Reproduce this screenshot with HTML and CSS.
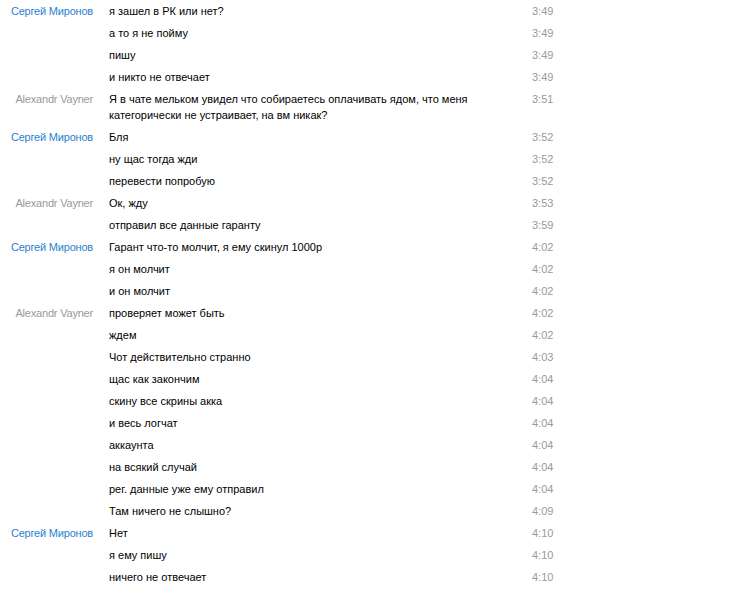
FILE: index.html
```html
<!DOCTYPE html>
<html>
<head>
<meta charset="utf-8">
<link rel="stylesheet" href="styles.css">
</head>
<body>
<div class="log">
  <div class="row"><div class="name me">Сергей Миронов</div><div class="msg">я зашел в РК или нет?</div><div class="time">3:49</div></div>
  <div class="row"><div class="name"></div><div class="msg">а то я не пойму</div><div class="time">3:49</div></div>
  <div class="row"><div class="name"></div><div class="msg">пишу</div><div class="time">3:49</div></div>
  <div class="row"><div class="name"></div><div class="msg">и никто не отвечает</div><div class="time">3:49</div></div>
  <div class="row"><div class="name other">Alexandr Vayner</div><div class="msg">Я в чате мельком увидел что собираетесь оплачивать ядом, что меня категорически не устраивает, на вм никак?</div><div class="time">3:51</div></div>
  <div class="row"><div class="name me">Сергей Миронов</div><div class="msg">Бля</div><div class="time">3:52</div></div>
  <div class="row"><div class="name"></div><div class="msg">ну щас тогда жди</div><div class="time">3:52</div></div>
  <div class="row"><div class="name"></div><div class="msg">перевести попробую</div><div class="time">3:52</div></div>
  <div class="row"><div class="name other">Alexandr Vayner</div><div class="msg">Ок, жду</div><div class="time">3:53</div></div>
  <div class="row"><div class="name"></div><div class="msg">отправил все данные гаранту</div><div class="time">3:59</div></div>
  <div class="row"><div class="name me">Сергей Миронов</div><div class="msg">Гарант что-то молчит, я ему скинул 1000р</div><div class="time">4:02</div></div>
  <div class="row"><div class="name"></div><div class="msg">я он молчит</div><div class="time">4:02</div></div>
  <div class="row"><div class="name"></div><div class="msg">и он молчит</div><div class="time">4:02</div></div>
  <div class="row"><div class="name other">Alexandr Vayner</div><div class="msg">проверяет может быть</div><div class="time">4:02</div></div>
  <div class="row"><div class="name"></div><div class="msg">ждем</div><div class="time">4:02</div></div>
  <div class="row"><div class="name"></div><div class="msg">Чот действительно странно</div><div class="time">4:03</div></div>
  <div class="row"><div class="name"></div><div class="msg">щас как закончим</div><div class="time">4:04</div></div>
  <div class="row"><div class="name"></div><div class="msg">скину все скрины акка</div><div class="time">4:04</div></div>
  <div class="row"><div class="name"></div><div class="msg">и весь логчат</div><div class="time">4:04</div></div>
  <div class="row"><div class="name"></div><div class="msg">аккаунта</div><div class="time">4:04</div></div>
  <div class="row"><div class="name"></div><div class="msg">на всякий случай</div><div class="time">4:04</div></div>
  <div class="row"><div class="name"></div><div class="msg">рег. данные уже ему отправил</div><div class="time">4:04</div></div>
  <div class="row"><div class="name"></div><div class="msg">Там ничего не слышно?</div><div class="time">4:09</div></div>
  <div class="row"><div class="name me">Сергей Миронов</div><div class="msg">Нет</div><div class="time">4:10</div></div>
  <div class="row"><div class="name"></div><div class="msg">я ему пишу</div><div class="time">4:10</div></div>
  <div class="row"><div class="name"></div><div class="msg">ничего не отвечает</div><div class="time">4:10</div></div>
</div>
</body>
</html>
```
FILE: styles.css
```css
html, body {
  margin: 0;
  padding: 0;
  background: #fff;
}
body {
  font-family: "Liberation Sans", Arial, sans-serif;
  font-size: 11px;
  line-height: 16px;
  color: #000;
}
.log {
  display: flex;
  flex-direction: column;
}
.row {
  display: grid;
  grid-template-columns: 109px 423px 60px;
  padding: 3px 0;
}
.name {
  text-align: right;
  padding-right: 16px;
  white-space: nowrap;
  letter-spacing: -0.2px;
}
.me { color: #2b7fd0; }
.other { color: #999; }
.msg {
  color: #000;
  padding-right: 40px;
}
.time {
  color: #999;
}
```
